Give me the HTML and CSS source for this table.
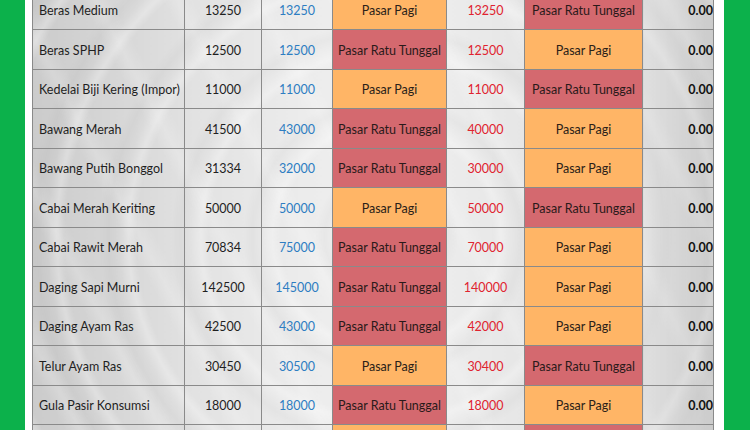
FILE: index.html
```html
<!DOCTYPE html>
<html lang="id">
<head>
<meta charset="utf-8">
<title>Harga Komoditas</title>
<link rel="stylesheet" href="styles.css">
</head>
<body>
<div class="frame">
  <table class="prices">
    <colgroup>
      <col class="c-name"><col class="c-het"><col class="c-max"><col class="c-mmax"><col class="c-min"><col class="c-mmin"><col class="c-diff">
    </colgroup>
    <tbody>
      <tr><td class="name">Beras Medium</td><td class="num">13250</td><td class="num hi">13250</td><td class="mk pagi">Pasar Pagi</td><td class="num lo">13250</td><td class="mk ratu">Pasar Ratu Tunggal</td><td class="diff">0.00</td></tr>
      <tr><td class="name">Beras SPHP</td><td class="num">12500</td><td class="num hi">12500</td><td class="mk ratu">Pasar Ratu Tunggal</td><td class="num lo">12500</td><td class="mk pagi">Pasar Pagi</td><td class="diff">0.00</td></tr>
      <tr><td class="name">Kedelai Biji Kering (Impor)</td><td class="num">11000</td><td class="num hi">11000</td><td class="mk pagi">Pasar Pagi</td><td class="num lo">11000</td><td class="mk ratu">Pasar Ratu Tunggal</td><td class="diff">0.00</td></tr>
      <tr><td class="name">Bawang Merah</td><td class="num">41500</td><td class="num hi">43000</td><td class="mk ratu">Pasar Ratu Tunggal</td><td class="num lo">40000</td><td class="mk pagi">Pasar Pagi</td><td class="diff">0.00</td></tr>
      <tr><td class="name">Bawang Putih Bonggol</td><td class="num">31334</td><td class="num hi">32000</td><td class="mk ratu">Pasar Ratu Tunggal</td><td class="num lo">30000</td><td class="mk pagi">Pasar Pagi</td><td class="diff">0.00</td></tr>
      <tr><td class="name">Cabai Merah Keriting</td><td class="num">50000</td><td class="num hi">50000</td><td class="mk pagi">Pasar Pagi</td><td class="num lo">50000</td><td class="mk ratu">Pasar Ratu Tunggal</td><td class="diff">0.00</td></tr>
      <tr><td class="name">Cabai Rawit Merah</td><td class="num">70834</td><td class="num hi">75000</td><td class="mk ratu">Pasar Ratu Tunggal</td><td class="num lo">70000</td><td class="mk pagi">Pasar Pagi</td><td class="diff">0.00</td></tr>
      <tr><td class="name">Daging Sapi Murni</td><td class="num">142500</td><td class="num hi">145000</td><td class="mk ratu">Pasar Ratu Tunggal</td><td class="num lo">140000</td><td class="mk pagi">Pasar Pagi</td><td class="diff">0.00</td></tr>
      <tr><td class="name">Daging Ayam Ras</td><td class="num">42500</td><td class="num hi">43000</td><td class="mk ratu">Pasar Ratu Tunggal</td><td class="num lo">42000</td><td class="mk pagi">Pasar Pagi</td><td class="diff">0.00</td></tr>
      <tr><td class="name">Telur Ayam Ras</td><td class="num">30450</td><td class="num hi">30500</td><td class="mk pagi">Pasar Pagi</td><td class="num lo">30400</td><td class="mk ratu">Pasar Ratu Tunggal</td><td class="diff">0.00</td></tr>
      <tr><td class="name">Gula Pasir Konsumsi</td><td class="num">18000</td><td class="num hi">18000</td><td class="mk ratu">Pasar Ratu Tunggal</td><td class="num lo">18000</td><td class="mk pagi">Pasar Pagi</td><td class="diff">0.00</td></tr>
      <tr class="edge"><td class="name"></td><td class="num"></td><td class="num hi"></td><td class="mk pagi"></td><td class="num lo"></td><td class="mk ratu"></td><td class="diff"></td></tr>
    </tbody>
  </table>
</div>
</body>
</html>
```

FILE: styles.css
```css
html, body {
  margin: 0;
  padding: 0;
  height: 100%;
  overflow: hidden;
}
body {
  background: #0cb14b;
  font-family: Lato, "Noto Sans", sans-serif;
  padding: 0 26px 0 25px;
}
.frame {
  background: #ffffff;
  height: 100%;
  padding: 0 11px 0 7px;
  overflow: hidden;
}
.prices {
  border-collapse: collapse;
  table-layout: fixed;
  width: 681px;
  margin-top: -10.5px;
  font-size: 12.5px;
  color: #1f1f1f;
  background:
    repeating-radial-gradient(circle at 52% 52%, rgba(255,255,255,0) 0, rgba(255,255,255,0) 34px, rgba(255,255,255,0.28) 42px, rgba(255,255,255,0) 52px, rgba(0,0,0,0.025) 62px, rgba(255,255,255,0) 72px),
    repeating-linear-gradient(62deg, rgba(255,255,255,0) 0, rgba(255,255,255,0) 45px, rgba(255,255,255,0.18) 58px, rgba(255,255,255,0) 72px),
    linear-gradient(90deg, #cbcbcb 0%, #d6d6d6 12%, #e2e2e2 24%, #ececec 40%, #efefef 55%, #e6e6e6 72%, #d9d9d9 86%, #cccccc 100%);
}
.c-name { width: 152px; }
.c-het { width: 77px; }
.c-max { width: 71px; }
.c-mmax { width: 114px; }
.c-min { width: 78px; }
.c-mmin { width: 118px; }
.c-diff { width: 71px; }
.prices td {
  height: 39.5px;
  padding: 2px 0 0 0;
  border: 1px solid #8a8a8a;
  box-sizing: border-box;
  white-space: nowrap;
  overflow: hidden;
}
.prices td.name {
  padding-left: 6px;
  text-align: left;
}
.prices td.num,
.prices td.mk {
  text-align: center;
}
.hi { color: #2d7dc2; }
.lo { color: #e0232f; }
.pagi { background: #ffb566; color: #2a2118; }
.ratu { background: #d4696f; color: #2a1a1a; }
.prices td.diff {
  text-align: right;
  font-weight: bold;
  padding-right: 0;
  color: #111;
  background: linear-gradient(90deg, rgba(232,232,232,0.5), rgba(200,200,200,0.25));
}
```
